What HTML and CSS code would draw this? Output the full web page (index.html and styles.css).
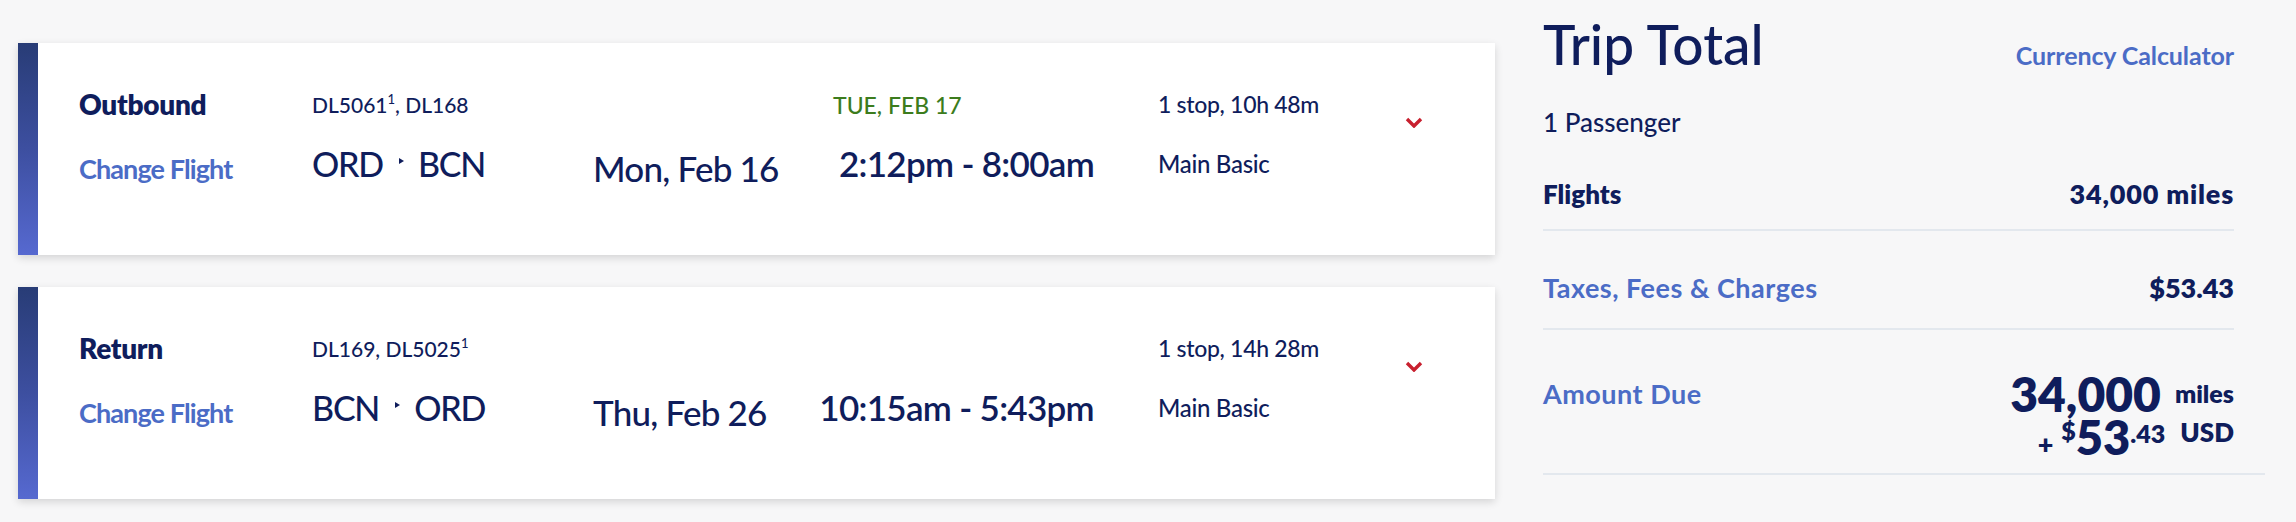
FILE: index.html
```html
<!DOCTYPE html>
<html lang="en">
<head>
<meta charset="utf-8">
<title>Trip Summary</title>
<link rel="stylesheet" href="styles.css">
</head>
<body>
<div class="page">
  <div class="flights">
    <div class="card">
      <div class="stripe"></div>
      <div class="card-body">
        <div class="col col-label">
          <div class="leg">Outbound</div>
          <a class="change">Change Flight</a>
        </div>
        <div class="col col-route">
          <div class="flightno">DL5061<sup>1</sup>, DL168</div>
          <div class="route"><span>ORD</span><svg class="sep" viewBox="0 0 5 6" width="5" height="6"><polygon points="0,0 5,3 0,6"/></svg><span>BCN</span></div>
        </div>
        <div class="col col-date">
          <div class="date">Mon, Feb 16</div>
        </div>
        <div class="col col-time">
          <div class="nextday">TUE, FEB 17</div>
          <div class="time">2:12pm - 8:00am</div>
        </div>
        <div class="col col-stops">
          <div class="stops">1 stop, 10h 48m</div>
          <div class="cabin">Main Basic</div>
        </div>
        <div class="col col-chevron">
          <svg class="chev" viewBox="0 0 18 11" width="18" height="11"><polyline points="2,2 9,9 16,2"/></svg>
        </div>
      </div>
    </div>
    <div class="card">
      <div class="stripe"></div>
      <div class="card-body">
        <div class="col col-label">
          <div class="leg">Return</div>
          <a class="change">Change Flight</a>
        </div>
        <div class="col col-route">
          <div class="flightno">DL169, DL5025<sup>1</sup></div>
          <div class="route"><span>BCN</span><svg class="sep" viewBox="0 0 5 6" width="5" height="6"><polygon points="0,0 5,3 0,6"/></svg><span>ORD</span></div>
        </div>
        <div class="col col-date">
          <div class="date">Thu, Feb 26</div>
        </div>
        <div class="col col-time">
          <div class="nextday"></div>
          <div class="time">10:15am - 5:43pm</div>
        </div>
        <div class="col col-stops">
          <div class="stops">1 stop, 14h 28m</div>
          <div class="cabin">Main Basic</div>
        </div>
        <div class="col col-chevron">
          <svg class="chev" viewBox="0 0 18 11" width="18" height="11"><polyline points="2,2 9,9 16,2"/></svg>
        </div>
      </div>
    </div>
  </div>

  <aside class="summary">
    <div class="summary-head">
      <h1 class="title">Trip Total</h1>
      <a class="calc">Currency Calculator</a>
    </div>
    <div class="pax">1 Passenger</div>
    <div class="srow srow-flights">
      <span class="s-label">Flights</span>
      <span class="s-value">34,000 miles</span>
    </div>
    <div class="srow srow-taxes">
      <a class="s-link">Taxes, Fees &amp; Charges</a>
      <span class="s-value">$53.43</span>
    </div>
    <div class="srow-amount">
      <a class="s-link">Amount Due</a>
      <div class="due">
        <div class="due-miles"><span class="big">34,000</span><span class="unit-miles">miles</span></div>
        <div class="due-cash"><span class="plus">+</span><span class="dollar">$</span><span class="big2">53</span><span class="cents">.43</span><span class="usd">USD</span></div>
      </div>
    </div>
  </aside>
</div>
</body>
</html>
```

FILE: styles.css
```css
* { box-sizing: border-box; }
html, body {
  margin: 0;
  padding: 0;
  background: #f7f7f8;
}
body {
  font-family: "Lato", "Noto Sans", sans-serif;
  color: #0f1d5c;
  width: 2296px;
  height: 522px;
  overflow: hidden;
}
.page {
  display: flex;
  align-items: flex-start;
  padding-left: 18px;
}
.flights {
  width: 1477px;
  padding-top: 43px;
  display: flex;
  flex-direction: column;
  gap: 32px;
}
.card {
  display: flex;
  height: 212px;
  background: #ffffff;
  box-shadow: 0 3px 8px rgba(0, 0, 0, 0.14);
}
.stripe {
  width: 20px;
  flex: none;
  background: linear-gradient(180deg, #283c76 0%, #3d4fa0 50%, #5669d0 100%);
}
.card-body {
  display: flex;
  padding-left: 41px;
  flex: 1;
}
.col {
  display: flex;
  flex-direction: column;
  line-height: 1;
}
.col-label { width: 233px; padding-top: 47px; }
.leg { font-size: 28px; font-weight: 800; letter-spacing: -0.3px; }
.change {
  margin-top: 37px;
  font-size: 27px;
  font-weight: 700;
  letter-spacing: -0.9px;
  color: #4b6cc6;
}
.col-route { width: 281px; padding-top: 51px; }
.flightno { font-size: 21px; font-weight: 500; }
.flightno sup {
  font-size: 13px;
  line-height: 0;
  vertical-align: 9px;
}
.route {
  margin-top: 32px;
  display: flex;
  align-items: flex-start;
  font-size: 34px;
  font-weight: 500;
  letter-spacing: -1.2px;
}
.sep {
  margin: 11px 14px 0 16px;
  fill: #0f1d5c;
}
.col-date { width: 240px; padding-top: 108px; }
.date { font-size: 35px; font-weight: 500; letter-spacing: -0.8px; }
.col-time {
  width: 261px;
  padding-top: 51px;
  align-items: flex-end;
}
.nextday {
  align-self: flex-start;
  height: 23px;
  font-size: 23px;
  font-weight: 500;
  color: #3c7c1d;
}
.time {
  margin-top: 29px;
  font-size: 35px;
  font-weight: 600;
  letter-spacing: -0.7px;
  white-space: nowrap;
}
.col-stops { margin-left: 64px; width: 247px; padding-top: 50px; }
.stops { font-size: 23px; font-weight: 500; letter-spacing: -0.3px; }
.cabin { margin-top: 36px; font-size: 24px; font-weight: 500; letter-spacing: -0.3px; }
.col-chevron { padding-top: 74px; }
.chev {
  fill: none;
  stroke: #c8202f;
  stroke-width: 3.4;
}

/* Summary */
.summary {
  margin-left: 48px;
  width: 722px;
  padding-top: 17px;
  line-height: 1;
}
.summary-head {
  display: flex;
  justify-content: space-between;
  align-items: baseline;
  margin-right: 31px;
}
.title {
  margin: 0;
  font-size: 55px;
  font-weight: 500;
  line-height: 1;
}
.calc {
  font-size: 25px;
  font-weight: 700;
  letter-spacing: -0.1px;
  color: #4b6cc6;
}
.pax {
  margin-top: 37px;
  font-size: 26px;
  font-weight: 500;
}
.srow {
  display: flex;
  justify-content: space-between;
  align-items: baseline;
  margin-right: 31px;
  border-bottom: 2px solid #e3e8ee;
}
.srow-flights {
  margin-top: 45px;
  padding-bottom: 22px;
  font-size: 26px;
  font-weight: 800;
}
.srow-flights .s-value { font-size: 27px; letter-spacing: 0.8px; }
.srow-taxes {
  padding-top: 43px;
  padding-bottom: 27px;
  font-size: 27px;
  font-weight: 800;
}
.s-link {
  font-size: 27px;
  font-weight: 700;
  letter-spacing: 0.5px;
  color: #4b6cc6;
}
.srow-amount {
  display: flex;
  justify-content: space-between;
  align-items: flex-start;
  padding-top: 50px;
  padding-right: 31px;
  padding-bottom: 12px;
  border-bottom: 2px solid #e3e8ee;
}
.due {
  margin-top: -8px;
  display: flex;
  flex-direction: column;
  align-items: flex-end;
  font-weight: 800;
}
.due-miles, .due-cash {
  display: flex;
  align-items: flex-start;
}
.due-miles { height: 42px; }
.big { font-size: 48px; line-height: 44px; }
.unit-miles { font-size: 25px; margin-top: 9px; margin-left: 14px; }
.plus { font-size: 27px; margin-top: 16px; margin-right: 8px; }
.dollar { font-size: 25px; margin-top: 4px; }
.big2 { font-size: 47px; margin-top: 0; }
.cents { font-size: 25px; margin-top: 7px; }
.usd { font-size: 26px; margin-top: 5px; margin-left: 15px; }
```
